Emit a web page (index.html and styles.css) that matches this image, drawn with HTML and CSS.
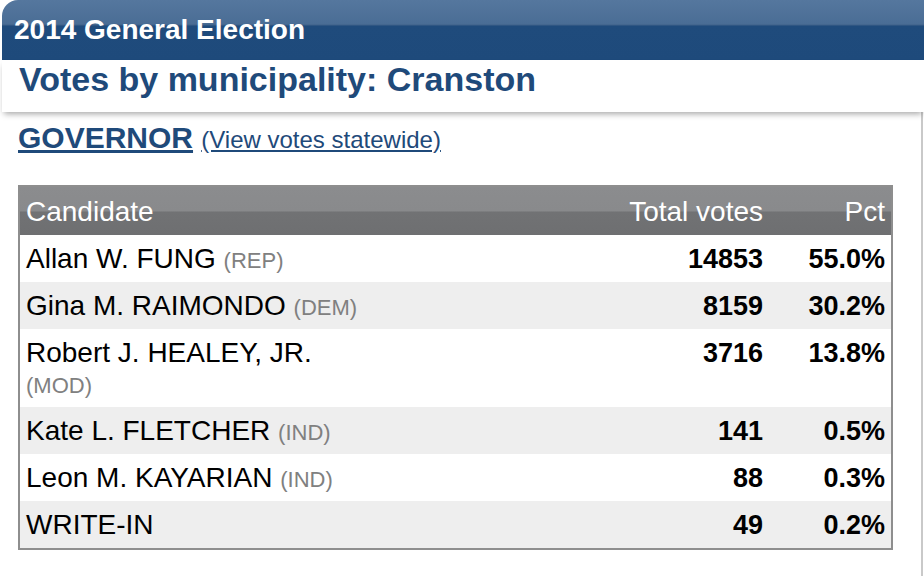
FILE: index.html
```html
<!DOCTYPE html>
<html lang="en">
<head>
<meta charset="utf-8">
<title>2014 General Election - Cranston</title>
<link rel="stylesheet" href="styles.css">
</head>
<body>
<div class="page">
  <header class="banner"><h1 class="banner-title">2014 General Election</h1></header>
  <div class="titlebox"><h2 class="page-title">Votes by municipality: Cranston</h2></div>
  <main class="content">
    <h3 class="race"><a class="race-name" href="#">GOVERNOR</a> <a class="race-link" href="#">(View votes statewide)</a></h3>
    <table class="results">
      <colgroup>
        <col class="col-cand">
        <col class="col-votes">
        <col class="col-pct">
      </colgroup>
      <thead>
        <tr>
          <th class="cand">Candidate</th>
          <th class="num">Total votes</th>
          <th class="num">Pct</th>
        </tr>
      </thead>
      <tbody>
        <tr>
          <td class="cand">Allan W. FUNG <span class="party">(REP)</span></td>
          <td class="num">14853</td>
          <td class="num">55.0%</td>
        </tr>
        <tr class="alt">
          <td class="cand">Gina M. RAIMONDO <span class="party">(DEM)</span></td>
          <td class="num">8159</td>
          <td class="num">30.2%</td>
        </tr>
        <tr>
          <td class="cand">Robert J. HEALEY, JR. <span class="party">(MOD)</span></td>
          <td class="num">3716</td>
          <td class="num">13.8%</td>
        </tr>
        <tr class="alt">
          <td class="cand">Kate L. FLETCHER <span class="party">(IND)</span></td>
          <td class="num">141</td>
          <td class="num">0.5%</td>
        </tr>
        <tr>
          <td class="cand">Leon M. KAYARIAN <span class="party">(IND)</span></td>
          <td class="num">88</td>
          <td class="num">0.3%</td>
        </tr>
        <tr class="alt">
          <td class="cand">WRITE-IN</td>
          <td class="num">49</td>
          <td class="num">0.2%</td>
        </tr>
      </tbody>
    </table>
  </main>
</div>
</body>
</html>
```
FILE: styles.css
```css
html, body {
  margin: 0;
  padding: 0;
  background: #ffffff;
}

body {
  font-family: "Liberation Sans", Arial, Helvetica, sans-serif;
  color: #000;
  overflow: hidden;
}

.page {
  width: 924px;
  height: 576px;
  overflow: hidden;
}

.banner {
  margin-left: 2px;
  height: 60px;
  padding-left: 12px;
  border-top-left-radius: 16px;
  background: linear-gradient(to bottom, #55779e 0, #4a6d95 24px, #3f6189 25px, #1f4b7c 26px, #1e4a7b 60px);
}

.banner-title {
  margin: 0;
  font-size: 28px;
  line-height: 60px;
  font-weight: bold;
  color: #ffffff;
}

.titlebox {
  position: relative;
  z-index: 1;
  margin-left: 2px;
  height: 52px;
  padding-left: 17px;
  background: #ffffff;
  box-shadow: 0 4px 6px -2px rgba(0, 0, 0, 0.35);
}

.page-title {
  margin: 0;
  font-size: 34px;
  line-height: 39px;
  font-weight: bold;
  color: #1f4a7a;
}

.content {
  margin-right: 1px;
  height: 464px;
  padding-top: 9px;
  padding-left: 18px;
  border-right: 2px solid #c9c9c9;
  box-sizing: border-box;
}

.race {
  margin: 0;
  line-height: 34px;
  font-weight: normal;
  word-spacing: 3px;
}

.race-name {
  font-size: 30px;
  font-weight: bold;
  color: #1f4a7a;
}

.race-link {
  font-size: 24px;
  word-spacing: 0;
  color: #1f4a7a;
}

.results {
  margin-top: 26px;
  width: 875px;
  border: 2px solid #8e8e8e;
  border-spacing: 0;
  font-size: 28px;
  line-height: 31px;
}

.col-cand { width: 357px; }
.col-pct { width: 122px; }

.results th {
  padding: 9px 6px 8px;
  font-weight: normal;
  color: #ffffff;
  background: linear-gradient(to bottom, #8b8c8e 0, #898a8c 50%, #717274 52%, #6e6f71 100%);
}

.results td {
  padding: 8px 6px 8px;
  vertical-align: top;
}

.results td.cand {
  padding-top: 8px;
  padding-bottom: 8px;
}

.results .cand {
  text-align: left;
}

.results .num {
  text-align: right;
}

.results td.num {
  font-size: 27px;
  font-weight: bold;
  padding-top: 9px;
  padding-bottom: 7px;
}

.results tr.alt td {
  background: #eeeeee;
}

.party {
  font-size: 22px;
  line-height: 1;
  color: #808080;
}
```
